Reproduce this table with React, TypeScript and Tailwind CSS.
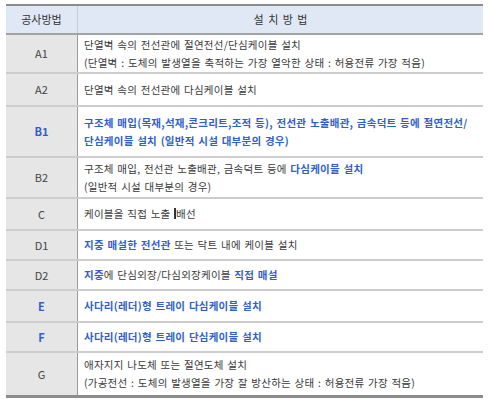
import React from 'react';

type Row = {
  code: string;
  blueCode?: boolean;
  h: string;
  lines: React.ReactNode[];
};

const B = ({ children }: { children: React.ReactNode }) => (
  <span className="font-bold text-[#2f5fcc]">{children}</span>
);

const rows: Row[] = [
  {
    code: 'A1',
    h: 'h-[39px]',
    lines: [
      '단열벽 속의 전선관에 절연전선/단심케이블 설치',
      '(단열벽 : 도체의 발생열을 축적하는 가장 열악한 상태 : 허용전류 가장 적음)',
    ],
  },
  { code: 'A2', h: 'h-[33px]', lines: ['단열벽 속의 전선관에 다심케이블 설치'] },
  {
    code: 'B1',
    blueCode: true,
    h: 'h-[51px]',
    lines: [
      <B>구조체 매입(목재,석재,콘크리트,조적 등), 전선관 노출배관, 금속덕트 등에 절연전선/</B>,
      <B>단심케이블 설치 (일반적 시설 대부분의 경우)</B>,
    ],
  },
  {
    code: 'B2',
    h: 'h-[41px]',
    lines: [
      <>
        구조체 매입, 전선관 노출배관, 금속덕트 등에 <B>다심케이블 설치</B>
      </>,
      '(일반적 시설 대부분의 경우)',
    ],
  },
  {
    code: 'C',
    h: 'h-[32px]',
    lines: [
      <>
        케이블을 직접 노출 <span className="inline-block w-[2px] h-[11px] bg-[#333] align-[-1px]" />배선
      </>,
    ],
  },
  {
    code: 'D1',
    h: 'h-[30px]',
    lines: [
      <>
        <B>지중 매설한 전선관</B> 또는 닥트 내에 케이블 설치
      </>,
    ],
  },
  {
    code: 'D2',
    h: 'h-[30px]',
    lines: [
      <>
        <B>지중</B>에 단심외장/다심외장케이블 <B>직접 매설</B>
      </>,
    ],
  },
  { code: 'E', blueCode: true, h: 'h-[32px]', lines: [<B>사다리(레더)형 트레이 다심케이블 설치</B>] },
  { code: 'F', blueCode: true, h: 'h-[30px]', lines: [<B>사다리(레더)형 트레이 단심케이블 설치</B>] },
  {
    code: 'G',
    h: 'h-[42px]',
    lines: [
      '애자지지 나도체 또는 절연도체 설치',
      '(가공전선 : 도체의 발생열을 가장 잘 방산하는 상태 : 허용전류 가장 적음)',
    ],
  },
];

export default function App() {
  return (
    <div
      className="w-[490px] h-[399px] bg-white pt-[4px] text-[10.5px] text-[#3a3a3a]"
      style={{ fontFamily: '"Noto Sans CJK KR", "Noto Sans", sans-serif' }}
    >
      <div className="ml-[6px] w-[477px] border-t-2 border-[#8c8c8c]">
        {/* Header */}
        <div className="flex h-[29px] bg-[#dfe8f4] border-b-2 border-[#a3a3a3]">
          <div className="w-[72px] border-r border-[#c4ccd6] flex items-center justify-center text-[11px] text-[#333]">
            공사방법
          </div>
          <div className="flex-1 flex items-center justify-center text-[11px] text-[#333] [word-spacing:2px]">
            설 치 방 법
          </div>
        </div>

        {/* Body */}
        {rows.map((row, i) => (
          <div
            key={row.code}
            className={`flex ${row.h} ${
              i === rows.length - 1 ? '' : 'border-b-2 border-[#cdcdcd]'
            }`}
          >
            <div
              className={`w-[72px] shrink-0 bg-[#e6e6e6] border-r border-[#9a9a9a] flex items-center justify-center text-[11px] ${
                row.blueCode ? 'font-bold text-[#2f5fcc]' : 'text-[#444]'
              }`}
            >
              {row.code}
            </div>
            <div className="flex-1 flex flex-col justify-center pl-[6px] leading-[18px] whitespace-nowrap tracking-[0.25px] [word-spacing:1px]">
              {row.lines.map((line, j) => (
                <div key={j}>{line}</div>
              ))}
            </div>
          </div>
        ))}
        <div className="border-t-[3px] border-[#8c8c8c]" />
      </div>
    </div>
  );
}
